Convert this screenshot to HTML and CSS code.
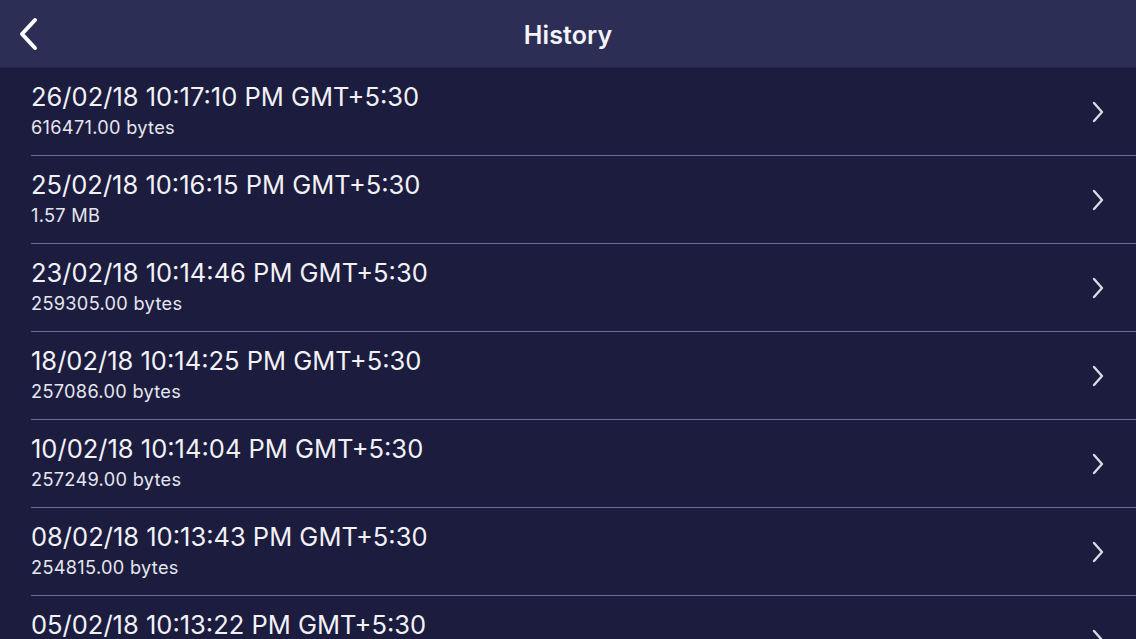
FILE: index.html
```html
<!DOCTYPE html>
<html>
<head>
<meta charset="utf-8">
<link rel="stylesheet" href="styles.css">
</head>
<body>
<header class="nav">
  <button class="back" aria-label="Back">
    <svg width="22" height="34" viewBox="0 0 22 34"><path d="M18 3 L5 17 L18 31" fill="none" stroke="#fff" stroke-width="4" stroke-linecap="round" stroke-linejoin="round"/></svg>
  </button>
  <h1 class="title">History</h1>
</header>
<ul class="list">
  <li class="row"><div class="text"><div class="date">26/02/18 10:17:10 PM GMT+5:30</div><div class="size">616471.00 bytes</div></div><svg class="chev" width="14" height="22" viewBox="0 0 14 22"><path d="M3 2 L11 11 L3 20" fill="none" stroke="#d8d8e4" stroke-width="2.4" stroke-linecap="round" stroke-linejoin="round"/></svg></li>
  <li class="row"><div class="text"><div class="date">25/02/18 10:16:15 PM GMT+5:30</div><div class="size">1.57 MB</div></div><svg class="chev" width="14" height="22" viewBox="0 0 14 22"><path d="M3 2 L11 11 L3 20" fill="none" stroke="#d8d8e4" stroke-width="2.4" stroke-linecap="round" stroke-linejoin="round"/></svg></li>
  <li class="row"><div class="text"><div class="date">23/02/18 10:14:46 PM GMT+5:30</div><div class="size">259305.00 bytes</div></div><svg class="chev" width="14" height="22" viewBox="0 0 14 22"><path d="M3 2 L11 11 L3 20" fill="none" stroke="#d8d8e4" stroke-width="2.4" stroke-linecap="round" stroke-linejoin="round"/></svg></li>
  <li class="row"><div class="text"><div class="date">18/02/18 10:14:25 PM GMT+5:30</div><div class="size">257086.00 bytes</div></div><svg class="chev" width="14" height="22" viewBox="0 0 14 22"><path d="M3 2 L11 11 L3 20" fill="none" stroke="#d8d8e4" stroke-width="2.4" stroke-linecap="round" stroke-linejoin="round"/></svg></li>
  <li class="row"><div class="text"><div class="date">10/02/18 10:14:04 PM GMT+5:30</div><div class="size">257249.00 bytes</div></div><svg class="chev" width="14" height="22" viewBox="0 0 14 22"><path d="M3 2 L11 11 L3 20" fill="none" stroke="#d8d8e4" stroke-width="2.4" stroke-linecap="round" stroke-linejoin="round"/></svg></li>
  <li class="row"><div class="text"><div class="date">08/02/18 10:13:43 PM GMT+5:30</div><div class="size">254815.00 bytes</div></div><svg class="chev" width="14" height="22" viewBox="0 0 14 22"><path d="M3 2 L11 11 L3 20" fill="none" stroke="#d8d8e4" stroke-width="2.4" stroke-linecap="round" stroke-linejoin="round"/></svg></li>
  <li class="row"><div class="text"><div class="date">05/02/18 10:13:22 PM GMT+5:30</div></div><svg class="chev" width="14" height="22" viewBox="0 0 14 22"><path d="M3 2 L11 11 L3 20" fill="none" stroke="#d8d8e4" stroke-width="2.4" stroke-linecap="round" stroke-linejoin="round"/></svg></li>
</ul>
</body>
</html>
```
FILE: styles.css
```css
* { box-sizing: border-box; }
html, body {
  margin: 0;
  padding: 0;
  height: 100%;
  overflow: hidden;
}
body {
  background: #1c1c3f;
  font-family: Inter, "Noto Sans", sans-serif;
  color: #ffffff;
}
.nav {
  height: 68px;
  background: #2d2e56;
  display: flex;
  align-items: center;
  justify-content: center;
  position: relative;
  border-bottom: 1px solid #26264a;
}
.back {
  position: absolute;
  left: 17px;
  top: 17px;
  background: none;
  border: 0;
  padding: 0;
  width: 22px;
  height: 34px;
}
.title {
  margin: 2px 0 0;
  font-size: 25px;
  font-weight: 600;
  letter-spacing: 0.1px;
  color: #f4f4f8;
}
.list {
  list-style: none;
  margin: 0;
  padding: 0 0 0 31px;
}
.row {
  height: 88px;
  display: flex;
  align-items: flex-start;
  border-bottom: 1px solid #6c6c90;
  padding: 14px 31px 0 0;
}
.text {
  flex: 1;
}
.date {
  font-size: 25.5px;
  line-height: 30px;
  color: #f2f2f6;
  font-weight: 400;
}
.size {
  font-size: 18.2px;
  line-height: 22px;
  letter-spacing: 0.3px;
  color: #e6e6ee;
  margin-top: 4px;
}
.chev {
  flex: none;
  margin-top: 19px;
}
```
